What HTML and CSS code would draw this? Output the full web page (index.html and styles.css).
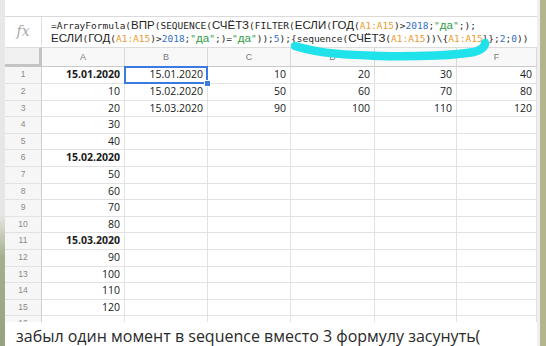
FILE: index.html
```html
<!DOCTYPE html>
<html lang="ru">
<head>
    <meta charset="UTF-8">
    <title>ArrayFormula</title>
    <link rel="stylesheet" href="styles.css">
</head>
<body>
    <div class="screen">
        <div class="edge-left"></div>
        <div class="app">
            <div class="toolbar"></div>
            <div class="formula-bar">
                <div class="fx">fx</div>
                <div class="formula">
                    <div class="line">=ArrayFormula(<span class="cy">ВПР</span>(SEQUENCE(<span class="cy">СЧЁТЗ</span>(FILTER(<span class="cy">ЕСЛИ</span>(<span class="cy">ГОД</span>(<span class="ref">A1:A15</span>)&gt;<span class="num">2018</span>;<span class="str">"<span class="cy">да</span>"</span>;);</div>
                    <div class="line"><span class="cy">ЕСЛИ</span>(<span class="cy">ГОД</span>(<span class="ref">A1:A15</span>)&gt;<span class="num">2018</span>;<span class="str">"<span class="cy">да</span>"</span>;)=<span class="str">"<span class="cy">да</span>"</span>));<span class="num">5</span>);{sequence(<span class="cy">СЧЁТЗ</span>(<span class="ref">A1:A15</span>))\{<span class="ref">A1:A15</span>}};<span class="num">2</span>;<span class="num">0</span>))</div>
                </div>
            </div>
            <div class="sheet">
                <div class="row head"><div class="corner"></div><div class="col">A</div><div class="col">B</div><div class="col">C</div><div class="col">D</div><div class="col">E</div><div class="col">F</div></div>
                <div class="row"><div class="rh">1</div><div class="c bold">15.01.2020</div><div class="c selected">15.01.2020</div><div class="c">10</div><div class="c">20</div><div class="c">30</div><div class="c">40</div></div>
                <div class="row"><div class="rh">2</div><div class="c">10</div><div class="c">15.02.2020</div><div class="c">50</div><div class="c">60</div><div class="c">70</div><div class="c">80</div></div>
                <div class="row"><div class="rh">3</div><div class="c">20</div><div class="c">15.03.2020</div><div class="c">90</div><div class="c">100</div><div class="c">110</div><div class="c">120</div></div>
                <div class="row"><div class="rh">4</div><div class="c">30</div><div class="c"></div><div class="c"></div><div class="c"></div><div class="c"></div><div class="c"></div></div>
                <div class="row"><div class="rh">5</div><div class="c">40</div><div class="c"></div><div class="c"></div><div class="c"></div><div class="c"></div><div class="c"></div></div>
                <div class="row"><div class="rh">6</div><div class="c bold">15.02.2020</div><div class="c"></div><div class="c"></div><div class="c"></div><div class="c"></div><div class="c"></div></div>
                <div class="row"><div class="rh">7</div><div class="c">50</div><div class="c"></div><div class="c"></div><div class="c"></div><div class="c"></div><div class="c"></div></div>
                <div class="row"><div class="rh">8</div><div class="c">60</div><div class="c"></div><div class="c"></div><div class="c"></div><div class="c"></div><div class="c"></div></div>
                <div class="row"><div class="rh">9</div><div class="c">70</div><div class="c"></div><div class="c"></div><div class="c"></div><div class="c"></div><div class="c"></div></div>
                <div class="row"><div class="rh">10</div><div class="c">80</div><div class="c"></div><div class="c"></div><div class="c"></div><div class="c"></div><div class="c"></div></div>
                <div class="row"><div class="rh">11</div><div class="c bold">15.03.2020</div><div class="c"></div><div class="c"></div><div class="c"></div><div class="c"></div><div class="c"></div></div>
                <div class="row"><div class="rh">12</div><div class="c">90</div><div class="c"></div><div class="c"></div><div class="c"></div><div class="c"></div><div class="c"></div></div>
                <div class="row"><div class="rh">13</div><div class="c">100</div><div class="c"></div><div class="c"></div><div class="c"></div><div class="c"></div><div class="c"></div></div>
                <div class="row"><div class="rh">14</div><div class="c">110</div><div class="c"></div><div class="c"></div><div class="c"></div><div class="c"></div><div class="c"></div></div>
                <div class="row"><div class="rh">15</div><div class="c">120</div><div class="c"></div><div class="c"></div><div class="c"></div><div class="c"></div><div class="c"></div></div>
                <div class="row"><div class="rh">16</div><div class="c"></div><div class="c"></div><div class="c"></div><div class="c"></div><div class="c"></div><div class="c"></div></div>
            </div>
            <p class="caption">забыл один момент в sequence вместо 3 формулу засунуть(</p>
        </div>
        <div class="edge-right"></div>
        <!-- hand-drawn highlight over the formula -->
        <svg class="marker" width="546" height="346" viewBox="0 0 546 346">
            <path d="M295 46 C320 54 350 55 380 56 C420 57 458 55 474 52 C481 50 485 47 485 43" fill="none" stroke="#1fe2ea" stroke-width="8.5" stroke-linecap="round"/>
        </svg>
    </div>
</body>
</html>
```

FILE: styles.css
```css
body {
    margin: 0;
    background: #fff;
}
.screen {
    position: relative;
    display: flex;
    width: 546px;
    height: 346px;
    overflow: hidden;
}
.edge-left {
    width: 5px;
    flex: none;
    background: linear-gradient(to bottom, #e8e8e8 0, #e6e6e4 62%, #a6b08f 74%, #95a27f 100%);
}
.edge-right {
    width: 6px;
    flex: none;
    border-left: 3px solid #eeeef3;
    background: #b3b68d;
}
.app {
    width: 532px;
    flex: none;
    display: flex;
    flex-direction: column;
    background: #fff;
}
.toolbar {
    height: 16px;
}
.formula-bar {
    display: flex;
    height: 30px;
    border-top: 1px solid #dadada;
    box-sizing: border-box;
}
.fx {
    width: 37px;
    border-right: 1px solid #dedede;
    box-sizing: border-box;
    font-family: "DejaVu Serif", serif;
    font-style: italic;
    font-size: 14px;
    color: #a8a8a8;
    text-align: center;
    line-height: 28px;
}
.formula {
    padding: 2px 0 0 9px;
    font-family: "DejaVu Sans Mono", monospace;
    font-size: 9.5px;
    line-height: 12px;
    color: #1f1f1f;
    white-space: nowrap;
}
.formula .cy {
    font-family: "Liberation Sans", sans-serif;
    font-size: 11.5px;
}
.formula .ref {
    color: #eb9a2c;
}
.formula .num {
    color: #2f6fc8;
}
.formula .str {
    color: #2f9a45;
}
.sheet {
    margin-top: 2px;
    height: 278px;
    overflow: hidden;
}
.row {
    display: grid;
    grid-template-columns: 37px 83px 83px 83px 84px 82px 80px;
    height: 16.6px;
}
.row.head {
    height: 20px;
}
.row > div {
    box-sizing: border-box;
    border-right: 1px solid #e2e2e2;
    border-bottom: 1px solid #e2e2e2;
    overflow: hidden;
}
.corner {
    background: #f1f1f1;
    border-right: 3px solid #c4c4c4 !important;
    border-bottom: 3px solid #c4c4c4 !important;
    border-top: 1px solid #dcdcdc;
}
.col {
    background: #f8f8f8;
    border-top: 1px solid #dcdcdc;
    border-right-color: #d8d8d8 !important;
    border-bottom-color: #cacaca !important;
    font-family: "Liberation Sans", sans-serif;
    font-size: 9px;
    color: #7a7a7a;
    text-align: center;
    line-height: 18px;
}
.rh {
    background: #f6f6f6;
    border-right-color: #cfcfcf !important;
    font-family: "Liberation Sans", sans-serif;
    font-size: 8.5px;
    color: #8a8a8a;
    text-align: center;
    line-height: 15.6px;
}
.c {
    font-family: "Open Sans", sans-serif;
    font-size: 10.5px;
    color: #202020;
    text-align: right;
    padding-right: 4px;
    line-height: 15.6px;
}
.c.bold {
    font-weight: 700;
}
.c.selected {
    position: relative;
    overflow: visible;
}
.c.selected::after {
    content: "";
    position: absolute;
    left: -1px;
    top: -1px;
    right: -1px;
    bottom: -1px;
    border: 2px solid #3b7be0;
}
.c.selected::before {
    content: "";
    position: absolute;
    right: -4px;
    bottom: -4px;
    width: 5px;
    height: 5px;
    background: #3b7be0;
    border: 1px solid #fff;
    z-index: 1;
}
.caption {
    margin: 0;
    padding: 4px 0 0 11px;
    font-family: "Open Sans", sans-serif;
    font-size: 16px;
    line-height: 20px;
    color: #2a2a2a;
    white-space: nowrap;
}
.marker {
    position: absolute;
    left: 0;
    top: 0;
    pointer-events: none;
}
```
